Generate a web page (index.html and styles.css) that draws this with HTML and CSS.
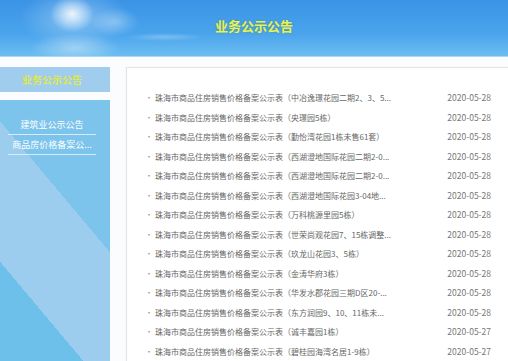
FILE: index.html
```html
<!DOCTYPE html>
<html lang="zh-CN">
<head>
    <meta charset="UTF-8">
    <meta name="viewport" content="width=device-width, initial-scale=1.0">
    <title>业务公示公告</title>
    <link rel="stylesheet" href="styles.css">
</head>
<body>
    <header class="banner">
        <div class="cloud"></div>
        <h1 class="banner-title">业务公示公告</h1>
    </header>

    <div class="page">
        <aside class="sidebar">
            <div class="side-head">业务公示公告</div>
            <div class="side-body">
                <ul class="side-menu">
                    <li><a href="#">建筑业公示公告</a></li>
                    <li><a href="#">商品房价格备案公...</a></li>
                </ul>
            </div>
        </aside>

        <main class="panel">
            <ul class="news-list">
                <li><a href="#">珠海市商品住房销售价格备案公示表（中冶逸璟花园二期2、3、5...</a><span class="date">2020-05-28</span></li>
                <li><a href="#">珠海市商品住房销售价格备案公示表（央璟园5栋）</a><span class="date">2020-05-28</span></li>
                <li><a href="#">珠海市商品住房销售价格备案公示表（勤怡湾花园1栋未售61套）</a><span class="date">2020-05-28</span></li>
                <li><a href="#">珠海市商品住房销售价格备案公示表（西湖澄地国际花园二期2-0...</a><span class="date">2020-05-28</span></li>
                <li><a href="#">珠海市商品住房销售价格备案公示表（西湖澄地国际花园二期2-0...</a><span class="date">2020-05-28</span></li>
                <li><a href="#">珠海市商品住房销售价格备案公示表（西湖澄地国际花园3-04地...</a><span class="date">2020-05-28</span></li>
                <li><a href="#">珠海市商品住房销售价格备案公示表（万科桃源里园5栋）</a><span class="date">2020-05-28</span></li>
                <li><a href="#">珠海市商品住房销售价格备案公示表（世荣尚观花园7、15栋调整...</a><span class="date">2020-05-28</span></li>
                <li><a href="#">珠海市商品住房销售价格备案公示表（玖龙山花园3、5栋）</a><span class="date">2020-05-28</span></li>
                <li><a href="#">珠海市商品住房销售价格备案公示表（金涛华府3栋）</a><span class="date">2020-05-28</span></li>
                <li><a href="#">珠海市商品住房销售价格备案公示表（华发水郡花园三期D区20-...</a><span class="date">2020-05-28</span></li>
                <li><a href="#">珠海市商品住房销售价格备案公示表（东方润园9、10、11栋未...</a><span class="date">2020-05-28</span></li>
                <li><a href="#">珠海市商品住房销售价格备案公示表（诚丰嘉园1栋）</a><span class="date">2020-05-27</span></li>
                <li><a href="#">珠海市商品住房销售价格备案公示表（碧桂园海湾名居1-9栋）</a><span class="date">2020-05-27</span></li>
            </ul>
        </main>
    </div>
</body>
</html>
```

FILE: styles.css
```css
* {
    margin: 0;
    padding: 0;
    box-sizing: border-box;
}

body {
    background-color: #ffffff;
    font-family: "Noto Sans CJK SC", "Noto Sans", sans-serif;
    overflow: hidden;
}

a {
    text-decoration: none;
    color: inherit;
}

ul {
    list-style: none;
}

.banner {
    position: relative;
    height: 57px;
    background: linear-gradient(180deg, #3b93e6 0%, #4aa4ec 60%, #6cbdf1 100%);
    border-bottom: 1px solid #a9d8f6;
    overflow: hidden;
}

/* sun glow and clouds on the left of the banner */
.cloud {
    position: absolute;
    left: 0;
    top: 0;
    width: 200px;
    height: 57px;
    background:
        radial-gradient(ellipse 22px 18px at 72px 14px, rgba(255, 255, 255, 0.85), rgba(255, 255, 255, 0) 100%),
        radial-gradient(ellipse 55px 30px at 75px 18px, rgba(255, 255, 255, 0.35), rgba(255, 255, 255, 0) 100%),
        radial-gradient(ellipse 45px 14px at 75px 48px, rgba(255, 255, 255, 0.4), rgba(255, 255, 255, 0) 100%),
        radial-gradient(ellipse 25px 14px at 115px 22px, rgba(255, 255, 255, 0.3), rgba(255, 255, 255, 0) 100%),
        radial-gradient(ellipse 40px 4px at 165px 37px, rgba(255, 255, 255, 0.25), rgba(255, 255, 255, 0) 100%);
}

.banner-title {
    position: relative;
    text-align: center;
    line-height: 52px;
    font-size: 13px;
    font-weight: 700;
    color: #e6f25a;
    text-shadow: 0 0 2px rgba(90, 140, 60, 0.6);
}

.page {
    display: flex;
    align-items: flex-start;
    padding-top: 10px;
    background-color: #fafcfd;
}

.sidebar {
    width: 110px;
    flex-shrink: 0;
}

.side-head {
    height: 25px;
    line-height: 25px;
    background-color: #a0cdee;
    color: #dfe84c;
    font-size: 10px;
    font-weight: 700;
    text-align: center;
    padding-right: 6px;
    margin-bottom: 8px;
}

.side-body {
    height: 270px;
    padding: 15px 14px 0 8px;
    background: linear-gradient(50deg, #6cc0ea 0%, #6cc0ea 27%, #9ccdef 27%, #9ccdef 62%, #7cc4ec 62%, #7cc4ec 100%);
}

.side-menu li {
    height: 20px;
    line-height: 19px;
    border-bottom: 1px solid #d6ecfa;
    text-align: center;
    font-size: 9px;
    color: #ffffff;
}

.panel {
    width: 394px;
    flex-shrink: 0;
    margin-left: 16px;
    min-height: 300px;
    background-color: #ffffff;
    border: 1px solid #e2e4e6;
    box-shadow: 0 0 2px rgba(0, 0, 0, 0.04);
    padding: 20px 28px 0 18px;
}

.news-list li {
    display: flex;
    justify-content: space-between;
    height: 19.5px;
    line-height: 19.5px;
    font-size: 8px;
    color: #666666;
}

.news-list li a::before {
    content: "·";
    margin-right: 2px;
    color: #999999;
}

.news-list .date {
    color: #777777;
    font-size: 8.5px;
}
```
